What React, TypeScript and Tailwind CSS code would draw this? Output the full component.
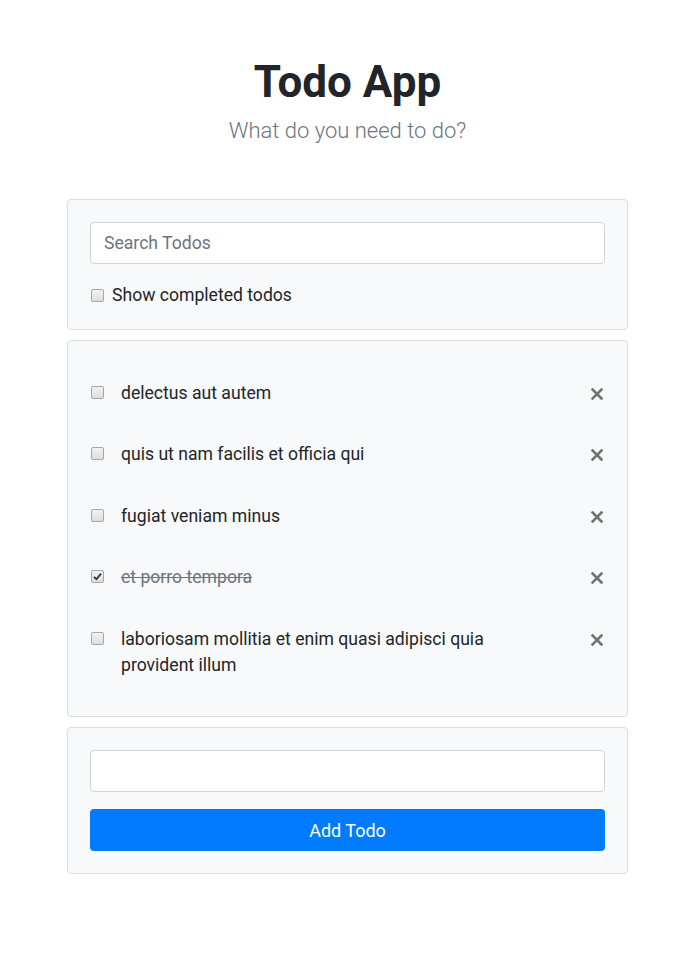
import React, { useState } from 'react';

type Todo = { id: number; text: string; completed: boolean };

const initialTodos: Todo[] = [
  { id: 1, text: 'delectus aut autem', completed: false },
  { id: 2, text: 'quis ut nam facilis et officia qui', completed: false },
  { id: 3, text: 'fugiat veniam minus', completed: false },
  { id: 4, text: 'et porro tempora', completed: true },
  { id: 5, text: 'laboriosam mollitia et enim quasi adipisci quia provident illum', completed: false },
];

const CloseIcon = () => (
  <svg width="12" height="12" viewBox="0 0 12 12" fill="none">
    <path d="M1.5 1.5L10.5 10.5M10.5 1.5L1.5 10.5" stroke="#727272" strokeWidth="2.6" strokeLinecap="square" />
  </svg>
);

// old-style grey checkbox, like the default one in the screenshot
const Checkbox: React.FC<{ checked: boolean; onChange: () => void; className?: string }> = ({
  checked,
  onChange,
  className = '',
}) => (
  <span className={'relative inline-block h-[13px] w-[13px] shrink-0 ' + className}>
    <input
      type="checkbox"
      checked={checked}
      onChange={onChange}
      className="m-0 block h-[13px] w-[13px] cursor-pointer appearance-none rounded-[2px] border border-[#a6a6a6] bg-gradient-to-b from-[#f2f2f2] to-[#dedede]"
    />
    {checked && (
      <svg className="pointer-events-none absolute left-[2px] top-[2px]" width="9" height="9" viewBox="0 0 9 9" fill="none">
        <path d="M1 4.8L3.4 7.2L8 1.6" stroke="#333" strokeWidth="1.8" />
      </svg>
    )}
  </span>
);

const App: React.FC = () => {
  const [todos, setTodos] = useState<Todo[]>(initialTodos);
  const [search, setSearch] = useState('');
  const [showCompleted, setShowCompleted] = useState(false);
  const [newTodo, setNewTodo] = useState('');

  const toggle = (id: number) =>
    setTodos(todos.map((t) => (t.id === id ? { ...t, completed: !t.completed } : t)));

  const remove = (id: number) => setTodos(todos.filter((t) => t.id !== id));

  const addTodo = () => {
    if (!newTodo.trim()) return;
    setTodos([...todos, { id: Date.now(), text: newTodo, completed: false }]);
    setNewTodo('');
  };

  return (
    <div className="min-h-screen bg-white text-[#212529]" style={{ fontFamily: 'Roboto, "Noto Sans", sans-serif' }}>
      <div className="ml-[67px] w-[561px] pt-[56px]">
        {/* Header */}
        <div className="text-center">
          <h1 className="text-[44px] font-bold leading-[52px] text-[#212529]">Todo App</h1>
          <p className="mt-[6px] text-[22px] font-light leading-[33px] text-[#6c757d]">What do you need to do?</p>
        </div>

        {/* Search card */}
        <div className="mt-[52px] rounded border border-[#dadcdf] bg-[#f8f9fa] px-[22px] pt-[22px] pb-[22px]">
          <input
            value={search}
            onChange={(e) => setSearch(e.target.value)}
            placeholder="Search Todos"
            className="block h-[42px] w-full rounded border border-[#ced4da] bg-white px-[13px] text-[17.6px] text-[#495057] outline-none placeholder:text-[#6c757d]"
          />
          <label className="mt-[19px] flex h-[24px] items-center text-[17.6px]">
            <Checkbox checked={showCompleted} onChange={() => setShowCompleted(!showCompleted)} className="mr-[8px] ml-[1px]" />
            Show completed todos
          </label>
        </div>

        {/* Todo list */}
        <div className="mt-[10px] rounded border border-[#dadcdf] bg-[#f8f9fa] px-[22px] pt-[21px] pb-[20px]">
          {todos.map((todo) => (
            <div key={todo.id} className="flex items-start py-[17.6px]">
              <Checkbox checked={todo.completed} onChange={() => toggle(todo.id)} className="mt-[6px] ml-[1px]" />
              <span
                className={
                  'ml-[17px] w-[400px] text-[17.6px] leading-[26.4px] ' +
                  (todo.completed ? 'text-[#6c757d] line-through' : 'text-[#212529]')
                }
              >
                {todo.text}
              </span>
              <button onClick={() => remove(todo.id)} className="ml-auto mt-[8px] mr-[2px] cursor-pointer">
                <CloseIcon />
              </button>
            </div>
          ))}
        </div>

        {/* Add todo */}
        <div className="mt-[10px] rounded border border-[#dadcdf] bg-[#f8f9fa] p-[22px]">
          <input
            value={newTodo}
            onChange={(e) => setNewTodo(e.target.value)}
            className="block h-[42px] w-full rounded border border-[#ced4da] bg-white px-[13px] text-[17.6px] outline-none"
          />
          <button
            onClick={addTodo}
            className="mt-[17px] block h-[42px] w-full cursor-pointer rounded bg-[#007bff] text-[18px] text-white"
          >
            Add Todo
          </button>
        </div>
      </div>
    </div>
  );
};

export default App;
